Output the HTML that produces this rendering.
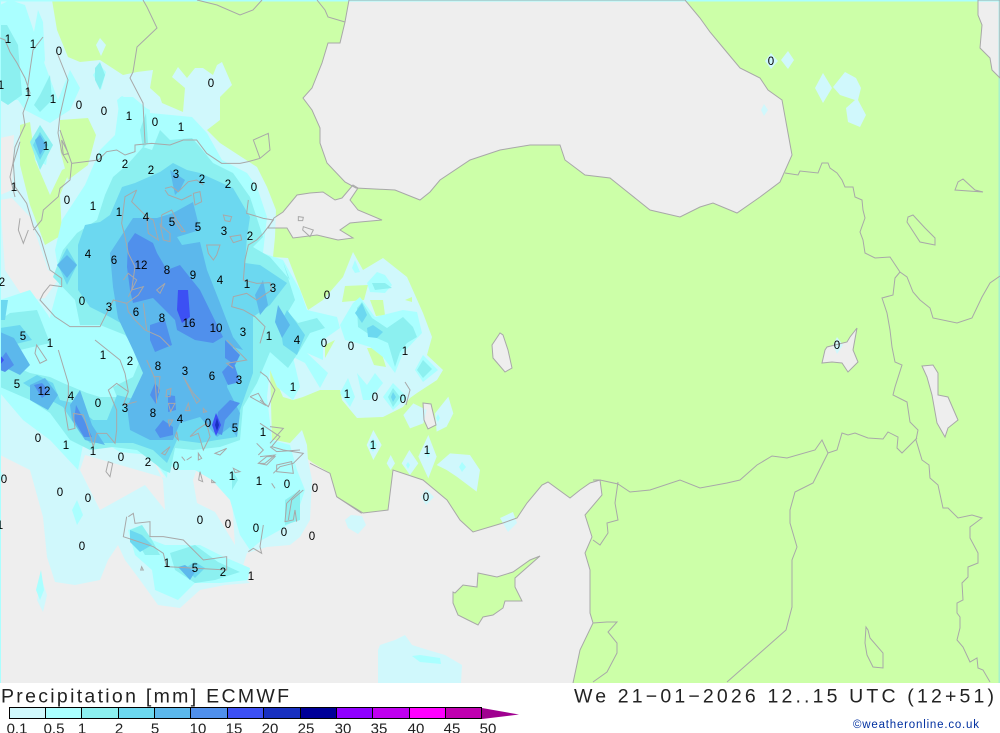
<!DOCTYPE html>
<html><head><meta charset="utf-8"><style>
html,body{margin:0;padding:0;background:#fff;width:1000px;height:733px;overflow:hidden}
svg{display:block;position:absolute;left:0;top:0}
text{font-family:"Liberation Sans",sans-serif}
.n text{font-size:11.5px;text-anchor:middle;fill:#000}
.l text{font-size:15px;text-anchor:middle;fill:#222}
</style></head><body>
<svg width="1000" height="733" viewBox="0 0 1000 733" xmlns="http://www.w3.org/2000/svg">
<defs>
<path id="sea" d="M349,0 L345,22 L340,43 L328,43 L322,63 L312,88 L303,98 L312,110 L320,128 L320,143 L327,163 L345,182 L356,188 L395,190 L420,200 L430,192 L440,180 L470,160 L500,150 L530,145 L560,145 L565,160 L585,175 L610,178 L625,190 L650,210 L680,217 L700,207 L713,203 L737,213 L760,197 L780,182 L792,155 L788,133 L782,100 L768,90 L760,78 L740,68 L725,50 L710,32 L700,18 L685,0 Z
M978,0 L978,15 L982,25 L980,48 L990,58 L992,70 L1000,78 L1000,0 Z
M353,185 L342,198 L335,200 L323,192 L310,193 L297,195 L283,212 L274,218 L268,228 L287,228 L293,238 L317,235 L338,240 L353,238 L340,230 L350,223 L360,222 L382,220 L358,210 L350,200 L358,188 Z
M500,333 L492,345 L493,358 L505,372 L512,368 L508,350 L503,335 Z
M423,403 L431,404 L436,425 L428,429 L424,420 Z
M822,363 L825,350 L827,347 L847,342 L850,337 L857,328 L853,350 L858,362 L848,372 L842,363 L832,362 Z
M922,366 L933,365 L938,373 L938,395 L948,397 L958,420 L948,428 L945,437 L937,423 L932,395 L927,377 Z"/>
<path id="green" d="M540,556 L530,560 L513,572 L497,577 L478,573 L477,587 L463,585 L455,593 L453,592 L453,603 L458,615 L468,620 L478,625 L483,617 L493,615 L503,608 L505,601 L522,601 L515,587 L515,578 Z"/>
</defs>
<rect width="1000" height="683" fill="#ccffa8"/>
<use href="#sea" fill="#eeeeee"/>
<path fill="#eeeeee" d="M0,683 L0,38 L5,40 L10,52 L17,63 L25,78 L30,93 L23,113 L25,125 L15,147 L13,163 L10,177 L15,197 L20,197 L30,217 L37,237 L50,270 L60,277 L43,297 L57,317 L72,327 L85,345 L100,330 L115,335 L125,360 L118,385 L135,400 L170,370 L195,390 L250,430 L272,440 L300,453 L313,463 L330,473 L337,497 L363,513 L388,510 L393,470 L423,480 L447,500 L460,520 L473,532 L503,523 L517,518 L527,503 L542,485 L548,482 L570,498 L580,490 L590,483 L600,480 L602,495 L585,515 L592,537 L585,553 L590,570 L590,613 L593,623 L580,650 L573,683 Z"/>
<use href="#green" fill="#ccffa8"/>
<g stroke="none">
<!-- 0.1 -->
<g fill="#d0f8fc">
<path d="M0,0 L52,0 L57,30 L68,57 L80,62 L100,60 L123,75 L137,72 L153,70 L150,88 L160,97 L162,103 L183,112 L185,88 L172,77 L178,67 L187,78 L195,68 L203,68 L213,75 L217,65 L222,62 L232,85 L220,97 L220,120 L207,130 L220,143 L257,167 L267,187 L276,210 L275,237 L273,257 L288,258 L303,297 L308,310 L323,300 L343,277 L353,252 L363,270 L383,258 L407,277 L423,313 L432,337 L427,355 L443,370 L437,380 L417,393 L410,398 L403,407 L383,417 L357,418 L342,400 L340,390 L320,390 L303,397 L293,400 L283,397 L270,367 L277,390 L272,420 L275,440 L290,443 L302,430 L307,445 L308,460 L312,480 L310,520 L300,537 L290,545 L267,547 L247,553 L240,575 L250,583 L225,585 L200,590 L180,608 L158,605 L140,580 L125,560 L118,545 L108,560 L100,580 L75,585 L55,582 L47,557 L43,517 L30,470 L0,455 Z"/>
<path d="M0,470 L8,480 L14,510 L8,520 L0,500 Z"/>
<path d="M10,505 L14,500 L20,512 L14,525 Z"/>
<path d="M37,600 L42,580 L47,595 L43,612 Z"/>
<path d="M378,650 L380,645 L395,640 L405,635 L412,645 L428,650 L445,655 L462,665 L461,683 L378,683 Z"/>
<path d="M351,515 L362,516 L366,525 L358,534 L348,528 L345,520 Z"/>
<path d="M500,518 L513,512 L517,523 L508,532 Z"/>
<g transform="translate(260,180) scale(.33333)">
<path d="M320,795 L340,750 L365,795 L340,840 Z"/>
<path d="M380,850 L392,825 L405,850 L392,870 Z"/>
<path d="M425,850 L448,810 L475,850 L450,885 Z"/>
<path d="M475,830 L505,765 L530,830 L505,895 Z"/>
<path d="M530,855 L570,820 L630,825 L660,870 L650,935 L590,890 L560,870 Z"/>
<path d="M430,705 L460,670 L500,690 L490,730 L450,745 Z"/>
<path d="M525,700 L565,650 L580,700 L560,740 L530,755 Z"/>
</g>
<path d="M771,53 L778,61 L771,69 L765,61 Z"/>
<path d="M788,51 L794,60 L788,69 L781,60 Z"/>
<path d="M823,73 L832,88 L823,103 L815,88 Z"/>
<path d="M845,72 L856,78 L861,88 L858,100 L866,115 L860,127 L848,122 L846,108 L855,100 L840,95 L833,87 Z"/>
<path d="M764,104 L768,110 L764,116 L761,110 Z"/>
<path d="M837,337 L843,345 L837,354 L833,345 Z"/>
<path d="M426,489 L434,497 L426,505 L421,497 Z"/>
<path d="M100,38 L106,45 L101,56 L96,45 Z"/>
</g>
<!-- holes -->
<path fill="#ccffa8" d="M60,120 L88,118 L96,135 L88,165 L68,180 L60,150 Z"/>
<path fill="#ccffa8" d="M20,125 L30,122 L35,160 L50,195 L62,170 L72,165 L60,195 L62,235 L45,245 L30,205 L20,165 Z"/>
<path fill="#ccffa8" d="M60,282 L73,285 L73,320 L62,316 Z"/>
<path fill="#ccffa8" d="M52,333 L80,340 L67,375 L55,355 Z"/>
<path fill="#ccffa8" d="M105,368 L118,365 L115,385 L105,388 Z"/>
<path fill="#ccffa8" d="M345,286 L368,285 L364,300 L342,302 Z"/>
<path fill="#ccffa8" d="M370,300 L383,300 L385,315 L376,316 Z"/>
<path fill="#ccffa8" d="M405,300 L412,297 L412,302 Z"/>
<path fill="#ccffa8" d="M367,348 L380,348 L386,367 L374,365 Z"/>
<path fill="#ccffa8" d="M325,345 L335,340 L325,358 Z"/>
<path fill="#ccffa8" d="M258,368 L273,365 L280,390 L275,440 L272,440 L270,367 Z"/>
<path fill="#eeeeee" d="M0,138 L14,135 L12,190 L0,195 Z"/>
<path fill="#eeeeee" d="M0,200 L12,198 L30,217 L48,270 L60,277 L45,298 L25,300 L5,270 Z"/>
<path fill="#eeeeee" d="M48,325 L60,330 L55,375 L38,360 Z"/>
<path fill="#eeeeee" d="M85,455 L120,465 L165,478 L150,455 L163,480 L165,510 L145,485 L100,510 L90,490 L80,470 Z"/>
<path fill="#eeeeee" d="M200,460 L215,480 L232,500 L235,545 L215,512 L197,503 L193,480 Z"/>
<path fill="#eeeeee" d="M0,480 L30,475 L43,520 L15,525 L0,530 Z"/>
<!-- 0.5 -->
<g fill="#aaffff">
<path d="M120,97 L133,97 L145,107 L150,113 L192,117 L207,133 L222,160 L247,173 L257,187 L267,217 L263,253 L283,260 L300,290 L307,310 L337,317 L340,328 L323,340 L323,360 L307,353 L328,373 L320,388 L305,363 L293,357 L300,387 L293,400 L277,387 L270,370 L267,397 L272,440 L290,445 L297,470 L305,490 L295,520 L280,530 L262,540 L250,550 L240,535 L230,500 L212,480 L195,470 L180,470 L168,465 L167,478 L150,455 L120,452 L100,440 L85,435 L78,470 L50,440 L23,420 L0,393 L0,300 L30,290 L48,315 L55,330 L45,335 L60,280 L55,250 L62,220 L85,185 L100,150 L115,135 Z"/>
<path d="M0,5 L10,0 L25,5 L30,20 L45,65 L58,100 L70,70 L80,88 L70,110 L50,123 L25,110 L18,100 L0,100 Z"/>
<path d="M28,65 L38,10 L43,22 L45,60 L40,75 Z"/>
<path d="M35,135 L40,125 L50,140 L46,165 L35,160 Z"/>
<path d="M100,65 L106,72 L101,90 L93,75 Z"/>
<path d="M117,100 L122,96 L150,110 L148,145 L135,145 L122,130 Z"/>
<path d="M128,530 L142,525 L152,540 L165,545 L200,545 L222,556 L250,568 L248,580 L220,583 L195,583 L178,600 L155,590 L152,570 L135,555 Z"/>
<path d="M77,500 L83,515 L77,525 L72,510 Z"/>
<path d="M41,570 L44,590 L40,600 L36,590 Z"/>
<path d="M353,303 L360,297 L375,317 L403,310 L417,312 L422,333 L403,353 L395,373 L383,357 L370,347 L357,343 L345,340 L340,325 Z"/>
<path d="M355,260 L360,272 L355,273 L352,268 Z"/>
<path d="M367,283 L377,272 L385,275 L392,285 L385,293 L370,292 Z"/>
<path d="M415,370 L423,355 L438,370 L423,382 Z"/>
<path d="M340,393 L348,378 L355,397 L350,407 Z"/>
<path d="M357,373 L367,385 L375,373 L383,383 L370,400 L363,400 Z"/>
<path d="M383,397 L393,383 L407,397 L393,410 Z"/>
<path d="M373,438 L377,445 L373,452 L369,445 Z"/>
<path d="M412,656 L420,655 L440,658 L441,664 L420,662 Z"/>
<path d="M462,462 L466,467 L462,472 L459,467 Z"/>
<path d="M408,462 L410,465 L408,469 L406,465 Z"/>
<path d="M438,414 L440,418 L438,422 L436,418 Z"/>
<path d="M428,448 L430,453 L428,458 L426,453 Z"/>
</g>
<!-- 1 -->
<g fill="#8cf0f0">
<path d="M152,150 L160,130 L170,140 L192,138 L200,147 L213,163 L233,173 L250,197 L263,237 L253,247 L270,257 L290,280 L283,262 L295,300 L288,312 L298,323 L317,318 L325,328 L310,333 L300,350 L288,368 L270,352 L257,383 L243,407 L240,440 L220,447 L193,450 L175,448 L170,473 L163,470 L137,450 L113,447 L90,450 L70,440 L50,413 L30,400 L0,387 L0,360 L30,373 L50,377 L63,383 L87,393 L100,397 L117,397 L113,387 L133,377 L140,360 L133,345 L125,335 L100,325 L80,325 L75,300 L53,277 L63,250 L77,233 L97,220 L105,195 L113,177 L127,165 L143,147 Z"/>
<path d="M0,320 L10,313 L37,310 L50,343 L20,350 L0,345 Z"/>
<path d="M0,25 L7,25 L18,45 L22,95 L8,105 L0,100 Z"/>
<path d="M40,95 L50,75 L52,100 L40,112 L34,105 Z"/>
<path d="M30,142 L40,125 L53,145 L40,170 Z"/>
<path d="M146,113 L148,143 L143,148 L140,130 Z"/>
<path d="M95,68 L100,62 L105,75 L100,90 L95,80 Z"/>
<path d="M130,530 L142,525 L152,540 L160,555 L145,555 Z"/>
<path d="M170,553 L195,545 L218,562 L240,572 L215,580 L195,583 L175,570 Z"/>
<path d="M357,308 L362,302 L372,318 L387,328 L403,317 L413,327 L417,337 L407,343 L400,352 L395,367 L388,343 L370,335 L358,327 Z"/>
<path d="M417,370 L423,360 L432,369 L423,378 Z"/>
<path d="M372,303 L385,303 L392,308 L375,310 Z" transform="translate(0,-20)" />
<path d="M388,397 L393,388 L400,397 L393,407 Z"/>
<path d="M232,470 L238,480 L232,490 Z"/>
<path d="M285,500 L300,490 L300,520 L285,525 Z"/>
</g>
<!-- 2 -->
<g fill="#6cd8f0">
<path d="M135,183 L160,172 L173,163 L187,170 L200,173 L233,188 L250,217 L247,237 L245,263 L260,265 L287,283 L270,305 L253,317 L253,340 L253,373 L240,410 L237,437 L217,440 L200,443 L177,440 L167,463 L153,450 L133,443 L110,443 L90,443 L80,433 L63,407 L50,400 L23,383 L37,375 L53,383 L60,400 L73,403 L93,420 L107,420 L117,395 L138,400 L147,370 L140,357 L147,343 L133,330 L110,317 L90,307 L78,290 L78,245 L85,225 L100,222 L110,215 L122,187 Z"/>
<path d="M287,310 L296,322 L305,335 L297,355 L283,345 L280,325 Z"/>
<path d="M0,328 L20,325 L32,340 L12,345 L0,345 Z"/>
<path d="M355,313 L362,303 L367,315 L362,323 Z"/>
<path d="M367,328 L373,325 L383,332 L377,338 L368,337 Z"/>
<path d="M58,265 L67,248 L77,265 L67,285 Z"/>
<path d="M33,145 L40,132 L48,145 L40,160 Z"/>
<path d="M0,300 L8,300 L5,320 L0,320 Z"/>
<path d="M195,562 L205,568 L195,578 L185,568 Z"/>
<path d="M130,530 L142,535 L152,545 L140,552 L130,542 Z"/>
<path d="M391,397 L393,392 L396,397 L393,402 Z"/>
</g>
<!-- 5 -->
<g fill="#5cb8ec">
<path d="M110,253 L133,218 L157,218 L173,213 L193,202 L200,230 L177,237 L182,245 L200,242 L207,270 L220,303 L233,337 L243,350 L233,347 L227,387 L240,413 L237,437 L230,427 L217,437 L200,417 L180,423 L173,440 L150,440 L130,430 L127,407 L143,373 L133,350 L118,318 L113,287 Z"/>
<path d="M67,255 L77,265 L67,278 L57,265 Z"/>
<path d="M0,332 L14,338 L30,365 L20,375 L0,365 Z"/>
<path d="M30,385 L45,378 L58,395 L48,410 L30,400 Z"/>
<path d="M70,405 L80,390 L92,425 L105,445 L85,440 L72,420 Z"/>
<path d="M255,295 L263,280 L268,305 L260,315 Z"/>
<path d="M170,170 L185,180 L180,190 L175,195 Z"/>
<path d="M35,140 L40,135 L46,145 L40,155 Z"/>
<path d="M178,567 L185,565 L195,572 L190,580 Z"/>
</g>
<!-- 10 -->
<g fill="#5090ec">
<path d="M135,233 L153,243 L157,253 L167,270 L180,265 L200,290 L223,337 L213,343 L195,340 L177,330 L175,320 L153,298 L133,303 L130,290 L127,267 L128,243 Z"/>
<path d="M150,325 L165,320 L172,345 L155,352 L150,340 Z"/>
<path d="M155,383 L160,390 L156,404 L150,395 Z"/>
<path d="M168,395 L175,396 L176,410 L168,412 Z"/>
<path d="M155,430 L163,420 L173,427 L173,435 L160,438 Z"/>
<path d="M76,405 L84,420 L92,437 L84,437 L74,420 Z"/>
<path d="M0,360 L6,352 L14,365 L5,372 L0,370 Z"/>
<path d="M34,385 L42,383 L50,392 L42,398 Z"/>
<path d="M222,372 L233,360 L240,382 L228,385 Z"/>
<path d="M218,412 L230,400 L240,403 L225,420 L222,435 L214,432 Z"/>
<path d="M225,340 L240,355 L235,365 L225,358 Z"/>
<path d="M278,305 L290,325 L282,338 L275,322 Z" fill="#5cb8ec"/>
</g>
<!-- 15 -->
<g fill="#3c50f4">
<path d="M178,290 L188,290 L190,317 L182,323 L177,310 Z"/>
<path d="M216,413 L221,425 L216,436 L212,425 Z"/>
<path d="M0,355 L4,360 L0,365 Z"/>
</g>
<path fill="#1830c0" d="M217,418 L219,425 L217,431 L215,425 Z"/>
<rect x="0" y="0" width="1000" height="1.5" fill="#aaffff"/>
<rect x="0" y="0" width="1" height="683" fill="#aaffff"/>
<rect x="998.5" y="0" width="1.5" height="683" fill="#8ce8e8" opacity=".6"/>
</g>
<!-- coast lines -->
<g fill="none" stroke="#a8a8a8" stroke-width="1">
<use href="#sea"/>
<use href="#green"/>
<path d="M337,497 L363,513 L388,510 L393,470 L423,480 L447,500 L460,520 L473,532 L503,523 L517,518 L527,503 L542,485 L548,482 L570,498 L580,490 L590,483 L600,480 L602,495 L585,515 L592,537 L585,553 L590,570 L590,613 L593,623 L580,650 L573,683"/>
<path d="M143,0 L147,7 L157,28 L137,47 L133,72 L130,78 L143,103 L145,143 M197,0 L217,5 L240,15 L253,10 L262,0 M317,0 L325,10 L328,17 L345,22
M0,38 L5,40 L10,52 L17,63 L25,78 L30,93 L23,113 L25,125 L15,147 L13,163 L10,177 L15,197 M43,37 L33,50 L30,70 L27,92 M58,55 L68,80 L60,115 L58,133 L62,153 L68,163
M785,173 L798,175 L800,171 L818,173 L822,163 L828,163 L830,168 L837,173 L842,180 L845,187 L853,187 L855,197 L862,200 L863,210 L865,218 L860,232 L863,240 L865,253 L875,258 L890,257 L900,272 L907,277 L913,292 L920,300 L930,308 L933,318 L957,323 L972,318 L982,297 L990,283 L1000,276
M900,272 L895,278 L893,295 L882,298 L887,313 L890,330 L892,347 L895,362 L902,365 L895,387 L893,395 L907,402 L910,422 L918,430 L916,440 L922,460 L929,465 L930,478 L938,485 L943,508 L948,508 L958,518 L972,515 L982,518 L970,527 L970,538 L978,553 L978,563 L968,567 L968,577 L962,583 L963,600 L957,603 L957,613 L960,617 L960,628 L957,640 L963,647 L970,662 L977,658 L978,668 L983,670 L990,682
M593,480 L600,480 L618,484 L630,492 L650,490 L680,480 L700,488 L727,483 L740,480 L757,465 L772,456 L787,458 L815,450 L822,440 L828,453 L837,450 L842,433 L848,435 L855,433 L868,438 L883,439 L888,432 L898,437 L897,448 L902,453 L917,438
M828,453 L813,483 L795,492 L790,510 L790,523 L797,547 L792,560 L792,607 L786,630 L727,682
M618,482 L615,503 L618,520 L607,523 L608,533 L600,545 L593,540
M593,623 L607,622 L617,622 L608,632 L617,643 L617,653 L607,672 L593,682
M866,627 L865,643 L867,655 L873,667 L883,668 L883,653 L870,638 L868,630 Z
M955,190 L958,182 L963,179 L975,190 L983,192 Z
M908,217 L913,215 L925,228 L935,238 L935,245 L920,242 L907,222 Z
M405,382 L410,390 L406,405"/>
<g transform="translate(0,130) scale(.33333)" stroke-width="3">
<path d="M60,35 L40,100 L45,170 L80,220 L100,290 L120,320 L150,420 L185,445 L185,470 L150,465 L130,490 L120,510 L165,560 L210,590 L240,590 L300,590 L340,510 L380,520 L385,545 L405,570 L435,600 L480,620 L510,650 M180,0 L215,100 L210,150 L180,175 L175,200 L130,240 L125,270 L100,300 M185,30 L205,70 L190,75 Z M60,265 L55,300 L70,340 L85,300 M215,100 L295,90 L320,65 L350,60 L375,75 L405,65 L405,45 L455,40 L510,45 L550,30 L590,30 L620,70 L665,100 L720,100 L745,95 L780,85 L810,60 L805,10 L760,30 L780,85
M495,175 L515,170 L535,185 L565,155 L590,150 L610,165 M495,180 L505,195 L545,210 L575,195 M580,190 L600,185 L605,215 L585,225 Z M670,255 L695,260 L690,275 L675,272 Z M690,320 L722,315 L725,330 L700,338 Z M620,345 L660,345 L650,375 L640,390 L625,370 Z
M410,180 L375,200 L365,280 L375,320 L385,370 L405,410 L395,480 L385,500 M410,180 L395,215 L440,260 L445,310 L475,330 L460,270 L440,260 M485,255 L515,240 L530,270 L555,305 L545,305 L515,260 M485,255 L485,290 L510,310 L510,335 L490,330 L480,280
M745,210 L740,250 L790,265 L820,270 L790,310 L770,330 L745,345 L735,390 L730,450 L770,460 L810,458 L815,480 L770,510 L740,490 L700,500 L695,530 L730,540 L765,560 L795,590 L780,640
M370,450 L385,430 L410,450 L395,480 L430,470 L415,495 L380,520 M430,520 L440,600 M470,480 L495,460 L480,490 Z"/>
</g>
<g transform="translate(0,340) scale(.33333)" stroke-width="3">
<path d="M110,15 L140,60 L120,70 L105,40 Z M175,30 L205,130 L205,170 L195,210 L205,270 L225,265 L220,220 L250,225 L265,270 L280,320 L290,280 L320,280 L345,310 L350,270 L350,210 L325,150 L350,130 L385,155 L370,195 L410,185 M285,0 L360,60 L375,100 L385,155
M440,60 L465,115 L470,190 M460,110 L480,110 L475,160 M500,150 L513,145 L510,170 L498,170 Z M505,190 L525,190 L512,215 Z M565,190 L570,212 L556,212 Z M550,110 L580,160 L600,180 L590,190 L555,120 M680,0 L720,40 L740,60 L680,70 L700,85 M610,205 L620,215 L610,217 Z
M505,240 L518,240 L508,258 Z M530,275 L535,300 L526,290 Z M570,290 L590,270 L620,250 L630,290 L610,330 L595,280 L570,290 M485,340 L510,320 L495,345 Z M545,350 L555,362 M560,360 L575,350 M595,340 L605,355 L595,360 Z M600,395 L608,425 L596,420 Z M635,420 L645,428 L635,428 Z M645,340 L680,325 L660,345 Z M700,385 L720,395 L705,398 Z
M750,170 L795,195 L775,160 L750,170 M770,310 L790,330 L775,345 M810,320 L830,335 L900,330 M810,310 L850,265 L810,260 M800,350 L825,350 L800,375 L775,370 Z M830,375 L875,365 L880,400 L830,395 Z M815,430 L825,445 M900,450 L860,490 L855,545 L880,540 L885,510 L890,545 M790,555 L780,620 L785,640 L760,625 L745,635
M385,530 L400,520 L405,550 L450,545 L450,590 L490,590 L550,600 L610,660 L680,650 L680,690 L500,680 L490,640 L460,620 L400,600 L370,590 L380,530 M325,365 L338,370 L330,410 L318,395 Z M425,680 L430,690 L422,690 Z"/>
</g>
<g transform="translate(260,180) scale(.33333)" stroke-width="3">
<path d="M0,575 L20,590 L45,630 L25,680 L0,660 M0,730 L60,770 L35,800 L70,810 L130,820 L100,850 L60,860 L40,880 M150,850 L210,880 L230,950 L305,1000 M0,830 L45,825 L15,850 L0,850 M130,930 L95,960 L85,1020 M115,110 L130,112 L128,122 L115,122 Z M130,140 L160,150 L150,170 L128,150 Z"/>
</g>
</g>
<!-- labels -->
<g class="n">
<text x="8" y="43">1</text><text x="33" y="48">1</text><text x="59" y="55">0</text><text x="211" y="87">0</text><text x="771" y="65">0</text>
<text x="1" y="89">1</text><text x="28" y="96">1</text><text x="53" y="103">1</text><text x="79" y="109">0</text><text x="104" y="115">0</text><text x="129" y="120">1</text><text x="155" y="126">0</text><text x="181" y="131">1</text>
<text x="46" y="150">1</text><text x="99" y="162">0</text><text x="125" y="168">2</text><text x="151" y="174">2</text><text x="176" y="178">3</text><text x="202" y="183">2</text><text x="228" y="188">2</text><text x="254" y="191">0</text><text x="14" y="191">1</text>
<text x="67" y="204">0</text><text x="93" y="210">1</text><text x="119" y="216">1</text><text x="146" y="221">4</text><text x="172" y="226">5</text><text x="198" y="231">5</text><text x="224" y="235">3</text><text x="250" y="240">2</text>
<text x="88" y="258">4</text><text x="114" y="264">6</text><text x="141" y="269">12</text><text x="167" y="274">8</text><text x="193" y="279">9</text><text x="220" y="284">4</text><text x="247" y="288">1</text><text x="273" y="292">3</text><text x="2" y="286">2</text>
<text x="82" y="305">0</text><text x="109" y="311">3</text><text x="136" y="316">6</text><text x="162" y="322">8</text><text x="189" y="327">16</text><text x="216" y="332">10</text><text x="243" y="336">3</text><text x="269" y="340">1</text><text x="297" y="344">4</text><text x="324" y="347">0</text><text x="351" y="350">0</text><text x="405" y="355">1</text><text x="327" y="299">0</text>
<text x="23" y="340">5</text><text x="50" y="347">1</text><text x="103" y="359">1</text><text x="130" y="365">2</text><text x="158" y="370">8</text><text x="185" y="375">3</text><text x="212" y="380">6</text><text x="239" y="384">3</text><text x="293" y="391">1</text>
<text x="17" y="388">5</text><text x="44" y="395">12</text><text x="71" y="400">4</text><text x="98" y="407">0</text><text x="125" y="412">3</text><text x="153" y="417">8</text><text x="180" y="423">4</text><text x="208" y="427">0</text><text x="235" y="432">5</text><text x="263" y="436">1</text>
<text x="347" y="398">1</text><text x="375" y="401">0</text><text x="403" y="403">0</text>
<text x="38" y="442">0</text><text x="66" y="449">1</text><text x="93" y="455">1</text><text x="121" y="461">0</text><text x="148" y="466">2</text><text x="176" y="470">0</text><text x="232" y="480">1</text><text x="259" y="485">1</text><text x="287" y="488">0</text><text x="315" y="492">0</text><text x="373" y="449">1</text><text x="427" y="454">1</text>
<text x="4" y="483">0</text><text x="60" y="496">0</text><text x="88" y="502">0</text><text x="426" y="501">0</text><text x="200" y="524">0</text><text x="228" y="528">0</text><text x="256" y="532">0</text><text x="284" y="536">0</text><text x="312" y="540">0</text><text x="82" y="550">0</text>
<text x="167" y="567">1</text><text x="195" y="572">5</text><text x="223" y="576">2</text><text x="251" y="580">1</text><text x="837" y="349">0</text><text x="0" y="529">1</text>
</g>
<!-- bottom band -->
<rect x="0" y="683" width="1000" height="50" fill="#fff"/>
<text x="1" y="702.5" font-size="19.5" textLength="288" lengthAdjust="spacing" fill="#222">Precipitation [mm] ECMWF</text>
<text x="574" y="702.5" font-size="19.5" textLength="420" lengthAdjust="spacing" fill="#222">We 21−01−2026 12..15 UTC (12+51)</text>
<text x="853" y="728" font-size="11.5" textLength="126" lengthAdjust="spacing" fill="#0030a0">©weatheronline.co.uk</text>
<g stroke="#000" stroke-width="1">
<rect x="9.5" y="707.5" width="36" height="11" fill="#d0f8fc"/>
<rect x="45.5" y="707.5" width="36" height="11" fill="#aaffff"/>
<rect x="81.5" y="707.5" width="37" height="11" fill="#8cf0f0"/>
<rect x="118.5" y="707.5" width="36" height="11" fill="#6cd8f0"/>
<rect x="154.5" y="707.5" width="36" height="11" fill="#5cb8ec"/>
<rect x="190.5" y="707.5" width="37" height="11" fill="#5090ec"/>
<rect x="227.5" y="707.5" width="36" height="11" fill="#3c50f4"/>
<rect x="263.5" y="707.5" width="37" height="11" fill="#1830c0"/>
<rect x="300.5" y="707.5" width="36" height="11" fill="#000098"/>
<rect x="336.5" y="707.5" width="36" height="11" fill="#9000ff"/>
<rect x="372.5" y="707.5" width="37" height="11" fill="#c000f0"/>
<rect x="409.5" y="707.5" width="36" height="11" fill="#ff00ff"/>
<rect x="445.5" y="707.5" width="36" height="11" fill="#c000b0"/>
</g>
<path d="M482,708 L519,714.5 L482,719 Z" fill="#a00090"/>
<g class="l">
<text x="17" y="733.5">0.1</text><text x="54" y="733.5">0.5</text><text x="82" y="733.5">1</text><text x="119" y="733.5">2</text><text x="155" y="733.5">5</text><text x="198" y="733.5">10</text><text x="234" y="733.5">15</text><text x="270" y="733.5">20</text><text x="306" y="733.5">25</text><text x="343" y="733.5">30</text><text x="379" y="733.5">35</text><text x="416" y="733.5">40</text><text x="452" y="733.5">45</text><text x="488" y="733.5">50</text>
</g>
</svg>
</body></html>
